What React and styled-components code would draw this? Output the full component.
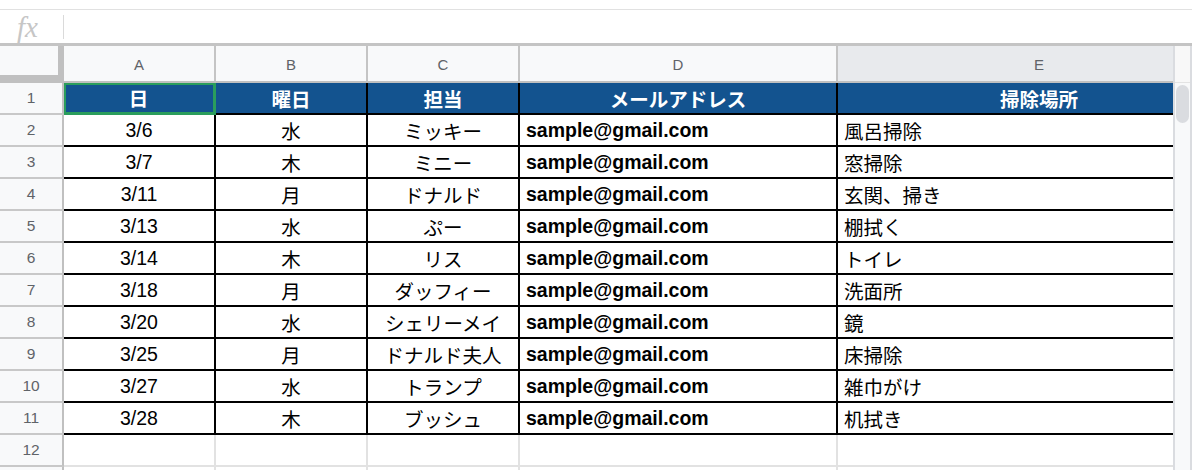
import React from "react";
import styled, { createGlobalStyle } from "styled-components";

const GlobalStyle = createGlobalStyle`
  body {
    margin: 0;
    background: #fff;
    font-family: "Liberation Sans", "Noto Sans CJK JP", Arial, sans-serif;
  }
`;

// column widths: row header, A, B, C, D, E (E runs under the scrollbar)
const COLS = "64px 152px 152px 152px 318px 404px";
const LETTERS = ["A", "B", "C", "D", "E"];
const ALIGN = ["center", "center", "center", "left", "left"];

const header = ["日", "曜日", "担当", "メールアドレス", "掃除場所"];
const rows = [
  ["3/6", "水", "ミッキー", "sample@gmail.com", "風呂掃除"],
  ["3/7", "木", "ミニー", "sample@gmail.com", "窓掃除"],
  ["3/11", "月", "ドナルド", "sample@gmail.com", "玄関、掃き"],
  ["3/13", "水", "ぷー", "sample@gmail.com", "棚拭く"],
  ["3/14", "木", "リス", "sample@gmail.com", "トイレ"],
  ["3/18", "月", "ダッフィー", "sample@gmail.com", "洗面所"],
  ["3/20", "水", "シェリーメイ", "sample@gmail.com", "鏡"],
  ["3/25", "月", "ドナルド夫人", "sample@gmail.com", "床掃除"],
  ["3/27", "水", "トランプ", "sample@gmail.com", "雑巾がけ"],
  ["3/28", "木", "ブッシュ", "sample@gmail.com", "机拭き"],
];

const Page = styled.div`
  width: 1192px;
  height: 470px;
  overflow: hidden;
  display: flex;
  flex-direction: column;
`;

const TopStrip = styled.div`
  height: 9px;
  border-bottom: 1px solid #e1e1e1;
`;

const FormulaBar = styled.div`
  height: 33px;
  border-bottom: 3px solid #c4c4c4;
  display: flex;
  align-items: center;
`;

const FxLabel = styled.div`
  width: 63px;
  padding-left: 17px;
  box-sizing: border-box;
  font-family: "Liberation Serif", "DejaVu Serif", serif;
  font-style: italic;
  font-size: 29px;
  color: #c6c6c6;
  line-height: 1;
  margin-top: 1px;
`;

const FxDivider = styled.div`
  width: 1px;
  height: 24px;
  background: #dadada;
`;

const Sheet = styled.div`
  flex: 1;
  display: flex;
  min-height: 0;
`;

const Grid = styled.div`
  width: 1173px;
  overflow: hidden;
  display: flex;
  flex-direction: column;
`;

const Row = styled.div`
  display: grid;
  grid-template-columns: ${COLS};
  height: ${(p) => p.$h}px;
  flex-shrink: 0;
`;

const Corner = styled.div`
  background: #f8f9fa;
  border-right: 6px solid #c0c0c0;
  border-bottom: 8px solid #c0c0c0;
`;

const ColHeader = styled.div`
  background: ${(p) => (p.$active ? "#e8eaed" : "#f8f9fa")};
  border-right: 2px solid #c4c4c4;
  border-bottom: 2px solid #c0c0c0;
  display: flex;
  align-items: center;
  justify-content: center;
  font-size: 15px;
  color: #5f6368;
  padding-top: 1px;
`;

const RowLabel = styled.div`
  background: #f8f9fa;
  border-right: 2px solid #c0c0c0;
  border-bottom: 2px solid #c8c8c8;
  display: flex;
  align-items: center;
  justify-content: center;
  font-size: 15.5px;
  color: #5f6368;
`;

const Cell = styled.div`
  display: flex;
  align-items: center;
  justify-content: ${(p) => (p.$align === "left" ? "flex-start" : "center")};
  padding: 0 6px;
  overflow: hidden;
  white-space: nowrap;
  font-size: 19.5px;
  color: ${(p) => (p.$head ? "#fff" : "#000")};
  font-weight: ${(p) => (p.$bold ? 700 : 400)};
  background: ${(p) => (p.$head ? "#13538f" : "#fff")};
  border-right: 2px solid ${(p) => (p.$empty ? "#e2e2e2" : "#000")};
  border-bottom: 2px solid ${(p) => (p.$empty ? "#e2e2e2" : "#000")};

  ${(p) =>
    p.$selected &&
    `
    border-right: 3px solid #2a9d5c;
    border-bottom: 3px solid #2a9d5c;
    box-shadow: inset 2px 2px 0 #2a9d5c;
  `}
`;

const Scrollbar = styled.div`
  width: 19px;
  display: flex;
  flex-direction: column;
  border-left: 2px solid #dadce0;
  border-right: 2px solid #dadce0;
  box-sizing: border-box;
`;

const ScrollCorner = styled.div`
  height: 36px;
  background: #f8f8f8;
  border-bottom: 1px solid #e3e3e3;
`;

const ScrollTrack = styled.div`
  flex: 1;
  background: #f8f9fa;
  padding: 2px 1px;
`;

const Thumb = styled.div`
  height: 38px;
  border-radius: 7px;
  background: #dadce0;
`;

export default function App() {
  return (
    <>
      <GlobalStyle />
      <Page>
        <TopStrip />
        <FormulaBar>
          <FxLabel>fx</FxLabel>
          <FxDivider />
        </FormulaBar>
        <Sheet>
          <Grid>
            <Row $h={37}>
              <Corner />
              {LETTERS.map((l) => (
                <ColHeader key={l} $active={l === "E"}>
                  {l}
                </ColHeader>
              ))}
            </Row>
            <Row $h={32}>
              <RowLabel>1</RowLabel>
              {header.map((h, i) => (
                <Cell key={h} $head $bold $selected={i === 0}>
                  {h}
                </Cell>
              ))}
            </Row>
            {rows.map((r, ri) => (
              <Row $h={32} key={ri}>
                <RowLabel>{ri + 2}</RowLabel>
                {r.map((v, ci) => (
                  <Cell key={ci} $align={ALIGN[ci]} $bold={ci === 3}>
                    {v}
                  </Cell>
                ))}
              </Row>
            ))}
            {[12, 13].map((n) => (
              <Row $h={32} key={n}>
                <RowLabel>{n === 12 ? n : ""}</RowLabel>
                {LETTERS.map((l) => (
                  <Cell key={l} $empty />
                ))}
              </Row>
            ))}
          </Grid>
          <Scrollbar>
            <ScrollCorner />
            <ScrollTrack>
              <Thumb />
            </ScrollTrack>
          </Scrollbar>
        </Sheet>
      </Page>
    </>
  );
}
